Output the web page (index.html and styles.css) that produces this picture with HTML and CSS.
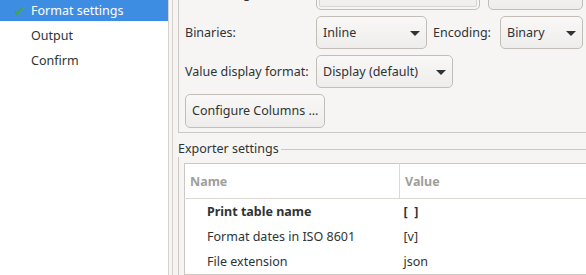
FILE: index.html
```html
<!DOCTYPE html>
<html lang="en">
<head>
<meta charset="utf-8">
<title>Data transfer - Format settings</title>
<link rel="stylesheet" href="styles.css">
</head>
<body>
<div class="steps">
  <div class="step current"><span class="tick">&#10004;</span>Format settings</div>
  <div class="step">Output</div>
  <div class="step">Confirm</div>
</div>
<div class="page">
  <div class="group format">
    <div class="grid">
      <div class="label">Formatting:</div>
      <div class="profile-row">
        <div class="combo focus"></div>
        <div class="button wide"></div>
      </div>

      <div class="label">Binaries:</div>
      <div class="combo">Inline<span class="arrow"></span></div>
      <div class="label">Encoding:</div>
      <div class="combo">Binary<span class="arrow"></span></div>

      <div class="label">Value display format:</div>
      <div class="combo span2">Display (default)<span class="arrow"></span></div>

      <div class="button first">Configure Columns ...</div>
    </div>
  </div>

  <div class="group-title">
    <span>Exporter settings</span>
    <div class="rule"></div>
  </div>
  <div class="group-body">
    <table class="props">
      <thead>
        <tr><th class="name">Name</th><th>Value</th></tr>
      </thead>
      <tbody>
        <tr class="changed"><td class="name">Print table name</td><td>[&nbsp;&nbsp;]</td></tr>
        <tr><td class="name">Format dates in ISO 8601</td><td>[v]</td></tr>
        <tr><td class="name">File extension</td><td>json</td></tr>
      </tbody>
    </table>
  </div>
</div>
</body>
</html>
```

FILE: styles.css
```css
html {
    overflow: hidden;
}

body {
    margin: 0;
    width: 586px;
    height: 275px;
    overflow: hidden;
    display: flex;
    background: #f6f5f4;
    color: #2e3436;
    font-family: "Noto Sans", "DejaVu Sans", sans-serif;
    font-size: 12.5px;
}

.steps {
    flex: 0 0 168px;
    background: #ffffff;
    border-right: 1px solid #d4d0cb;
}

.step {
    height: 25px;
    line-height: 25px;
    padding-left: 31px;
    white-space: nowrap;
}

.step.current {
    height: 21px;
    line-height: 21px;
    margin-bottom: 2px;
    background: #3d8ee3;
    color: #ffffff;
    position: relative;
}

.tick {
    position: absolute;
    left: 14px;
    top: 0;
    color: #46a544;
    font-size: 14px;
    font-weight: bold;
}

.page {
    flex: 0 0 440px;
    margin-left: 3px;
    border-left: 1px solid #d4d0cb;
    padding-left: 5px;
}

.group {
    border: 1px solid #cdc8c3;
    margin-top: -30px;
    padding: 6px 6px 5px 6px;
}

.grid {
    display: grid;
    grid-template-columns: 125px 111px 61px 83px;
    grid-auto-rows: 33px;
    column-gap: 6px;
    row-gap: 6px;
    align-items: center;
}

.label {
    white-space: nowrap;
}

.profile-row {
    grid-column: 2 / span 3;
    display: flex;
    gap: 8px;
    height: 33px;
}

.combo {
    position: relative;
    box-sizing: border-box;
    height: 33px;
    line-height: 31px;
    padding-left: 6px;
    border: 1px solid #c3bdb7;
    border-radius: 5px;
    background: linear-gradient(#f9f8f7, #efedeb);
    white-space: nowrap;
}

.combo.focus {
    width: 175px;
    box-shadow: inset 0 0 0 2px #f6f5f4, inset 0 0 0 3px #d9d5d0;
}

.combo.span2 {
    grid-column: 2 / span 2;
    width: 137px;
}

.arrow {
    position: absolute;
    right: 6px;
    top: 14px;
    width: 0;
    height: 0;
    border-left: 5px solid transparent;
    border-right: 5px solid transparent;
    border-top: 5px solid #2e3436;
}

.button {
    box-sizing: border-box;
    height: 34px;
    line-height: 32px;
    padding: 0 6px;
    border: 1px solid #c3bdb7;
    border-radius: 5px;
    background: linear-gradient(#f9f8f7, #efedeb);
    white-space: nowrap;
    justify-self: start;
}

.button.first {
    grid-column: 1 / span 2;
}

.button.wide {
    width: 100px;
    height: 33px;
}

.group-title {
    display: flex;
    align-items: center;
    height: 16px;
    margin-top: 8px;
}

.group-title span {
    white-space: nowrap;
    line-height: 16px;
}

.rule {
    flex: 1;
    border-top: 1px solid #cdc8c3;
    margin-left: 2px;
}

.group-body {
    border-left: 1px solid #cdc8c3;
    padding: 6px 0 0 5px;
    height: 200px;
}

.props {
    width: 430px;
    border-collapse: collapse;
    background: #ffffff;
    border: 1px solid #cdc8c3;
}

.props th {
    height: 34px;
    text-align: left;
    padding: 0 0 0 5px;
    color: #a09e9c;
    font-weight: bold;
    border-bottom: 1px solid #dcd9d5;
}

.props th.name {
    width: 209px;
    border-right: 1px solid #dcd9d5;
}

.props td {
    height: 25px;
    padding: 0 0 0 4px;
    white-space: nowrap;
}

.props td.name {
    padding-left: 22px;
}

.props tr.changed td {
    font-weight: bold;
}
```
